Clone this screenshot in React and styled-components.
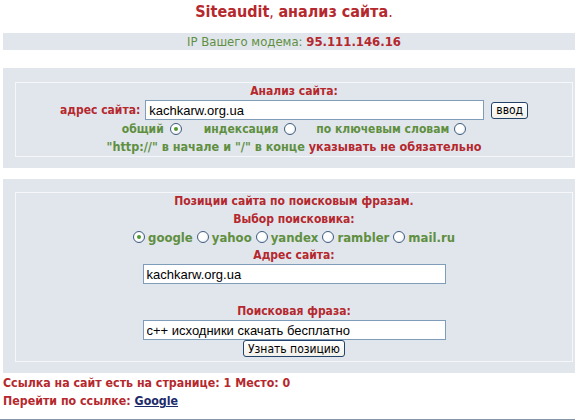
import React from "react";
import styled, { createGlobalStyle } from "styled-components";

const RED = "#b5282d";
const GREEN = "#5f8f3f";
const BAND = "#e1e6ed";

const GlobalStyle = createGlobalStyle`
  html, body {
    margin: 0;
    padding: 0;
    background: #fff;
    overflow: hidden;
  }
`;

const Page = styled.div`
  width: 582px;
  margin-left: 3px;
  font-family: "DejaVu Sans Condensed", "DejaVu Sans", sans-serif;
  font-size: 12px;
`;

const Title = styled.div`
  height: 31px;
  padding-top: 2px;
  text-align: center;
  font-size: 16px;
  line-height: 20px;
  color: ${RED};
  font-weight: normal;

  b {
    font-weight: bold;
  }
`;

const IpBar = styled.div`
  height: 17px;
  line-height: 17px;
  background: ${BAND};
  text-align: center;
  color: ${GREEN};
  font-size: 13px;
`;

const Panel = styled.div`
  margin-top: ${props => props.$top}px;
  padding: ${props => props.$pt}px 12px 11px 12px;
  background: ${BAND};
`;

const Inner = styled.div`
  border: 1px solid #f5f7fa;
  text-align: center;
`;

const Line = styled.div`
  height: ${props => props.$h || 18}px;
  line-height: ${props => props.$h || 18}px;
  font-weight: bold;
  font-size: ${props => props.$size || 12}px;
  color: ${props => (props.$green ? GREEN : RED)};
  white-space: nowrap;
`;

const Red = styled.span`
  color: ${RED};
  font-weight: ${props => (props.$bold ? "bold" : "inherit")};
`;

const Green = styled.span`
  color: ${GREEN};
`;

const FieldRow = styled.div`
  display: flex;
  justify-content: center;
  align-items: ${props => props.$align || "center"};
  height: ${props => props.$h || 20}px;
`;

const Label = styled.span`
  color: ${RED};
  font-weight: bold;
  margin-right: 5px;
`;

const TextInput = styled.input`
  box-sizing: border-box;
  width: ${props => props.$w}px;
  height: 20px;
  border: 1px solid #7f9db9;
  background: #fff;
  padding: 0 3px;
  font-family: "Liberation Sans", Arial, sans-serif;
  font-size: 13px;
  color: #000;
  outline: none;
`;

const Button = styled.button`
  box-sizing: border-box;
  height: 17px;
  margin-left: ${props => props.$ml || 0}px;
  padding: 0 4px;
  border: 1px solid #23436a;
  border-radius: 3px;
  background: linear-gradient(#ffffff, #f1f0ea);
  font-family: "DejaVu Sans Condensed", "DejaVu Sans", sans-serif;
  font-size: 12px;
  line-height: 14px;
  color: #000;
`;

const RadioRow = styled.div`
  display: flex;
  justify-content: center;
  align-items: center;
  height: 18px;
  font-size: ${props => props.$size || 12}px;
  color: ${GREEN};
  font-weight: bold;
  white-space: nowrap;
`;

const Radio = styled.span`
  box-sizing: border-box;
  display: inline-block;
  width: 12px;
  height: 12px;
  border-radius: 50%;
  border: 1px solid #3f5d80;
  background: radial-gradient(circle at 40% 40%, #ffffff 40%, #dfe3e8 100%);
  position: relative;
  margin: ${props => props.$m || "0"};

  &::after {
    content: "";
    display: ${props => (props.$on ? "block" : "none")};
    position: absolute;
    left: 3px;
    top: 3px;
    width: 4px;
    height: 4px;
    border-radius: 50%;
    background: #4f9a2c;
  }
`;

const Result = styled.div`
  padding-top: 1px;
  font-weight: bold;
  font-size: 12.3px;
  color: ${RED};
  line-height: 18px;

  a {
    color: #1d2b6b;
    text-decoration: underline;
  }
`;

const BottomRule = styled.div`
  margin-top: 9px;
  margin-left: -3px;
  width: 600px;
  border-top: 2px solid #8396a8;
`;

export default function App() {
  return (
    <>
      <GlobalStyle />
      <Page>
        <Title>
          <b>Siteaudit</b>, <b>анализ сайта</b>.
        </Title>
        <IpBar>
          IP Вашего модема: <Red $bold>95.111.146.16</Red>
        </IpBar>

        <Panel $top={18} $pt={14}>
          <Inner>
            <Line $h={17}>Анализ сайта:</Line>
            <FieldRow>
              <Label>адрес сайта:</Label>
              <TextInput $w={339} defaultValue="kachkarw.org.ua" />
              <Button $ml={7}>ввод</Button>
            </FieldRow>
            <RadioRow>
              общий <Radio $on $m="0 22px 0 6px" />
              индексация <Radio $m="0 20px 0 6px" />
              по ключевым словам <Radio $m="0 0 0 5px" />
            </RadioRow>
            <Line $green $size={12.5}>
              "http://" в начале и "/" в конце <Red>указывать не обязательно</Red>
            </Line>
          </Inner>
        </Panel>

        <Panel $top={11} $pt={13}>
          <Inner>
            <Line $h={17}>Позиции сайта по поисковым фразам.</Line>
            <Line>Выбор поисковика:</Line>
            <RadioRow $size={13}>
              <Radio $on $m="0 3px 0 0" />
              <Green>google</Green>
              <Radio $m="0 3px 0 4px" />
              <Green>yahoo</Green>
              <Radio $m="0 3px 0 4px" />
              <Green>yandex</Green>
              <Radio $m="0 3px 0 4px" />
              <Green>rambler</Green>
              <Radio $m="0 3px 0 4px" />
              <Green>mail.ru</Green>
            </RadioRow>
            <Line>Адрес сайта:</Line>
            <FieldRow>
              <TextInput $w={303} defaultValue="kachkarw.org.ua" />
            </FieldRow>
            <Line />
            <Line>Поисковая фраза:</Line>
            <FieldRow>
              <TextInput $w={303} defaultValue="c++ исходники скачать бесплатно" />
            </FieldRow>
            <FieldRow $h={21} $align="flex-start">
              <Button>Узнать позицию</Button>
            </FieldRow>
          </Inner>
        </Panel>

        <Result>
          Ссылка на сайт есть на странице: 1 Место: 0
          <br />
          Перейти по ссылке: <a href="#">Google</a>
        </Result>
        <BottomRule />
      </Page>
    </>
  );
}
